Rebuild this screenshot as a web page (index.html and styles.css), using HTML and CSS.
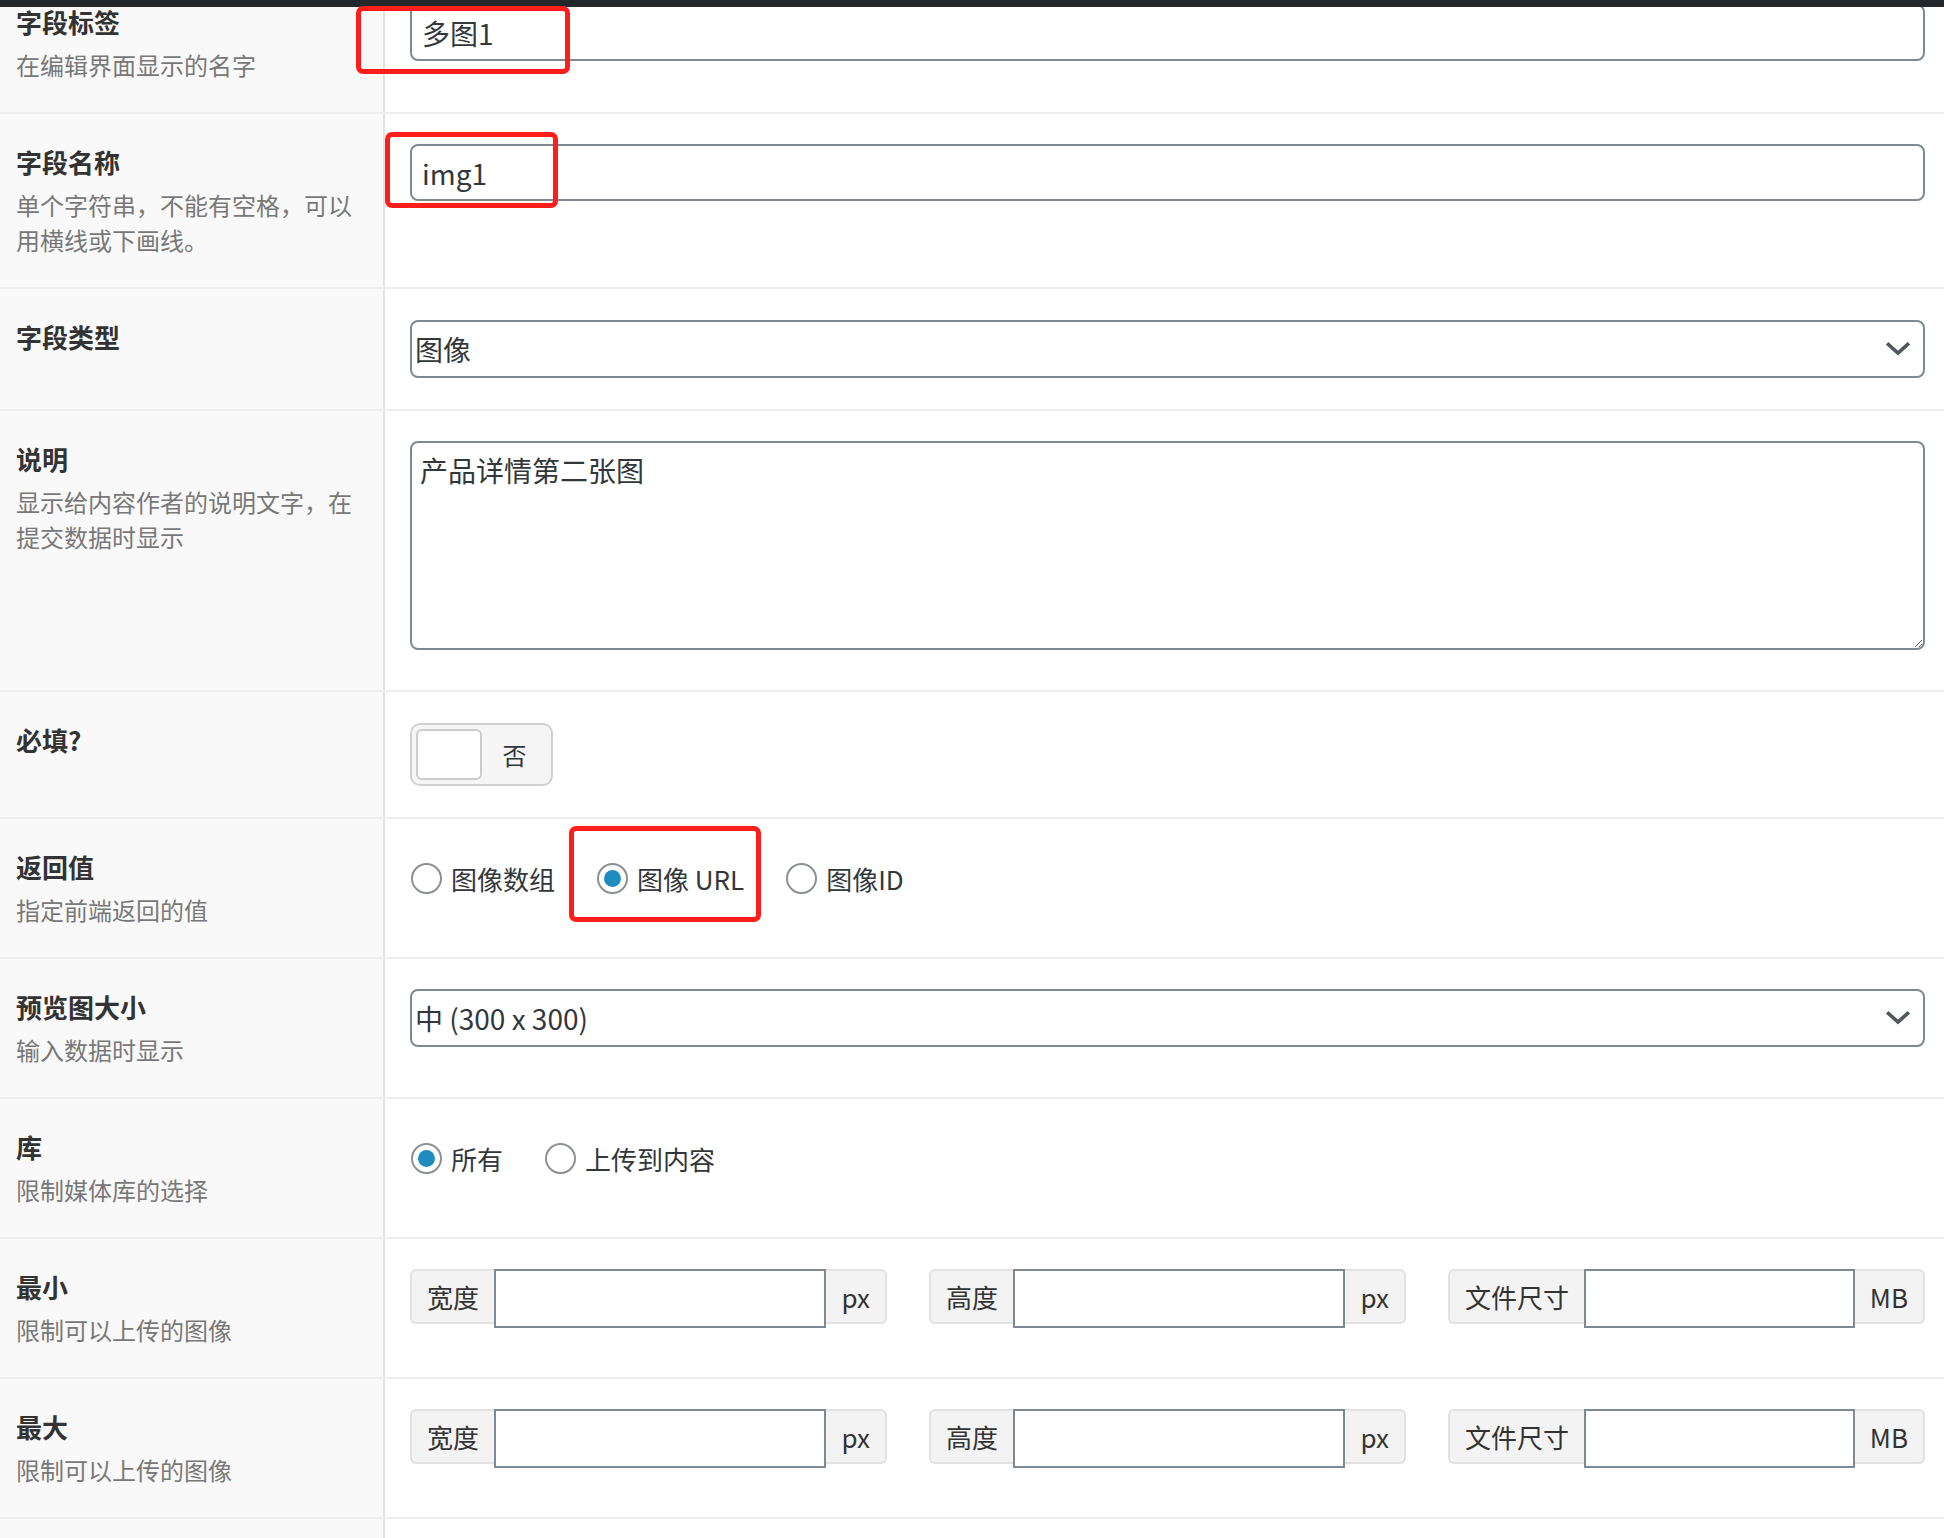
FILE: index.html
```html
<!DOCTYPE html>
<html lang="zh-CN">
<head>
<meta charset="utf-8">
<title>字段设置</title>
<link rel="stylesheet" href="styles.css">
</head>
<body>
<div class="adminbar"></div>

<div class="fields">
  <div class="field">
    <div class="field-label"><label>字段标签</label><p class="desc">在编辑界面显示的名字</p></div>
    <div class="field-input"><input class="text" type="text" value="多图1"></div>
  </div>

  <div class="field">
    <div class="field-label"><label>字段名称</label><p class="desc">单个字符串，不能有空格，可以用横线或下画线。</p></div>
    <div class="field-input"><input class="text" type="text" value="img1"></div>
  </div>

  <div class="field">
    <div class="field-label"><label>字段类型</label></div>
    <div class="field-input tall">
      <div class="select-wrap">
        <select class="select"><option>图像</option></select>
        <svg class="chev" width="24" height="14" viewBox="0 0 24 14"><polyline points="2.5,2.5 12,11 21.5,2.5" fill="none" stroke="#50575e" stroke-width="3.6" stroke-linecap="square"/></svg>
      </div>
    </div>
  </div>

  <div class="field">
    <div class="field-label"><label>说明</label><p class="desc">显示给内容作者的说明文字，在提交数据时显示</p></div>
    <div class="field-input"><textarea class="area">产品详情第二张图</textarea></div>
  </div>

  <div class="field">
    <div class="field-label"><label>必填?</label></div>
    <div class="field-input tall">
      <div class="toggle"><span class="knob"></span><span class="off">否</span></div>
    </div>
  </div>

  <div class="field">
    <div class="field-label"><label>返回值</label><p class="desc">指定前端返回的值</p></div>
    <div class="field-input">
      <ul class="radios">
        <li class="radio"><span class="dot"></span>图像数组</li>
        <li class="radio checked"><span class="dot"></span>图像 URL</li>
        <li class="radio"><span class="dot"></span>图像ID</li>
      </ul>
    </div>
  </div>

  <div class="field">
    <div class="field-label"><label>预览图大小</label><p class="desc">输入数据时显示</p></div>
    <div class="field-input">
      <div class="select-wrap">
        <select class="select"><option>中 (300 x 300)</option></select>
        <svg class="chev" width="24" height="14" viewBox="0 0 24 14"><polyline points="2.5,2.5 12,11 21.5,2.5" fill="none" stroke="#50575e" stroke-width="3.6" stroke-linecap="square"/></svg>
      </div>
    </div>
  </div>

  <div class="field">
    <div class="field-label"><label>库</label><p class="desc">限制媒体库的选择</p></div>
    <div class="field-input">
      <ul class="radios">
        <li class="radio checked"><span class="dot"></span>所有</li>
        <li class="radio"><span class="dot"></span>上传到内容</li>
      </ul>
    </div>
  </div>

  <div class="field">
    <div class="field-label"><label>最小</label><p class="desc">限制可以上传的图像</p></div>
    <div class="field-input">
      <div class="groups">
        <div class="group"><span class="addon pre">宽度</span><input type="text"><span class="addon post">px</span></div>
        <div class="group"><span class="addon pre">高度</span><input type="text"><span class="addon post">px</span></div>
        <div class="group"><span class="addon pre">文件尺寸</span><input type="text"><span class="addon post">MB</span></div>
      </div>
    </div>
  </div>

  <div class="field">
    <div class="field-label"><label>最大</label><p class="desc">限制可以上传的图像</p></div>
    <div class="field-input">
      <div class="groups">
        <div class="group"><span class="addon pre">宽度</span><input type="text"><span class="addon post">px</span></div>
        <div class="group"><span class="addon pre">高度</span><input type="text"><span class="addon post">px</span></div>
        <div class="group"><span class="addon pre">文件尺寸</span><input type="text"><span class="addon post">MB</span></div>
      </div>
    </div>
  </div>

  <div class="field field-empty">
    <div class="field-label"></div>
    <div class="field-input"></div>
  </div>
</div>

<div class="annot annot-1"></div>
<div class="annot annot-2"></div>
<div class="annot annot-3"></div>
</body>
</html>
```

FILE: styles.css
```css
html, body {
  margin: 0;
  padding: 0;
  background: #fff;
}

body {
  font-family: "Noto Sans CJK SC", sans-serif;
  color: #32373c;
  overflow: hidden;
}

.adminbar {
  position: fixed;
  top: 0;
  left: 0;
  right: 0;
  height: 7px;
  background: #23282d;
  z-index: 5;
}

.fields {
  margin-top: -26px;
}

.field {
  display: grid;
  grid-template-columns: 385px 1fr;
  border-bottom: 2px solid #eeeeee;
}

.field-label {
  box-sizing: border-box;
  background: #f9f9f9;
  border-right: 2px solid #e3e3e3;
  padding: 30px 16px;
}

.field-label label {
  display: block;
  font-size: 26px;
  font-weight: 700;
  line-height: 36px;
  color: #333;
}

.desc {
  margin: 7px 0 0;
  font-size: 24px;
  line-height: 35px;
  color: #787878;
}

.field-input {
  padding: 30px 19px 30px 25px;
  min-width: 0;
}

.field-input.tall {
  padding-top: 31px;
  padding-bottom: 31px;
}

.field-empty .field-label,
.field-empty .field-input {
  min-height: 80px;
}

.text {
  display: block;
  width: 100%;
  box-sizing: border-box;
  height: 57px;
  margin: 0;
  border: 2px solid #7e8993;
  border-radius: 8px;
  padding: 0 10px;
  font-family: "Noto Sans CJK SC", sans-serif;
  font-size: 28px;
  color: #32373c;
  background: #fff;
  outline: none;
}

.select-wrap {
  position: relative;
}

.select {
  display: block;
  width: 100%;
  box-sizing: border-box;
  height: 58px;
  margin: 0;
  border: 2px solid #7e8993;
  border-radius: 8px;
  padding: 0 60px 0 3px;
  font-family: "Noto Sans CJK SC", sans-serif;
  font-size: 28px;
  color: #32373c;
  background: #fff;
  -webkit-appearance: none;
  appearance: none;
  outline: none;
}

.chev {
  position: absolute;
  right: 15px;
  top: 22px;
  pointer-events: none;
}

.area {
  display: block;
  width: 100%;
  box-sizing: border-box;
  height: 209px;
  margin: 0 0 10px;
  border: 2px solid #7e8993;
  border-radius: 8px;
  padding: 7px 8px;
  font-family: "Noto Sans CJK SC", sans-serif;
  font-size: 28px;
  line-height: 40px;
  color: #32373c;
  background: #fff;
  outline: none;
}

.toggle {
  display: flex;
  align-items: center;
  width: 143px;
  height: 63px;
  box-sizing: border-box;
  border: 2px solid #d0d0d0;
  border-radius: 10px;
  background: #f5f5f5;
  padding: 4px;
}

.toggle .knob {
  width: 66px;
  height: 51px;
  box-sizing: border-box;
  border: 2px solid #cccccc;
  border-radius: 6px;
  background: #fff;
}

.toggle .off {
  flex: 1;
  text-align: center;
  font-size: 24px;
  color: #32373c;
}

.radios {
  display: flex;
  align-items: center;
  gap: 41px;
  height: 58px;
  margin: 0;
  padding: 0;
  list-style: none;
}

.radio {
  display: flex;
  align-items: center;
  font-size: 26px;
  color: #32373c;
}

.radio .dot {
  display: grid;
  place-items: center;
  width: 31px;
  height: 31px;
  box-sizing: border-box;
  margin: 0 9px 0 1px;
  border: 2px solid #8c8f94;
  border-radius: 50%;
  background: #fff;
}

.radio.checked .dot::after {
  content: "";
  width: 17px;
  height: 17px;
  border-radius: 50%;
  background: #1e8cbe;
}

.groups {
  display: grid;
  grid-template-columns: repeat(3, 1fr);
  gap: 42px;
}

.group {
  display: flex;
  align-items: flex-start;
  min-width: 0;
}

.addon {
  display: flex;
  align-items: center;
  height: 55px;
  box-sizing: border-box;
  padding: 0 15px;
  background: #f3f3f3;
  border: 2px solid #e2e2e2;
  font-size: 26px;
  color: #333;
  white-space: nowrap;
}

.addon.pre {
  border-right: 0;
  border-radius: 6px 0 0 6px;
}

.addon.post {
  border-left: 0;
  border-radius: 0 6px 6px 0;
}

.group input {
  flex: 1;
  min-width: 0;
  height: 59px;
  box-sizing: border-box;
  margin: 0;
  border: 2px solid #7e8993;
  border-radius: 0;
  padding: 0 10px;
  font-size: 26px;
  background: #fff;
  outline: none;
}

.annot {
  position: absolute;
  box-sizing: border-box;
  border: 5px solid #ff1e1a;
  border-radius: 7px;
  z-index: 10;
}

.annot-1 {
  left: 356px;
  top: 6px;
  width: 214px;
  height: 68px;
}

.annot-2 {
  left: 385px;
  top: 132px;
  width: 173px;
  height: 76px;
}

.annot-3 {
  left: 569px;
  top: 826px;
  width: 192px;
  height: 96px;
}
```
